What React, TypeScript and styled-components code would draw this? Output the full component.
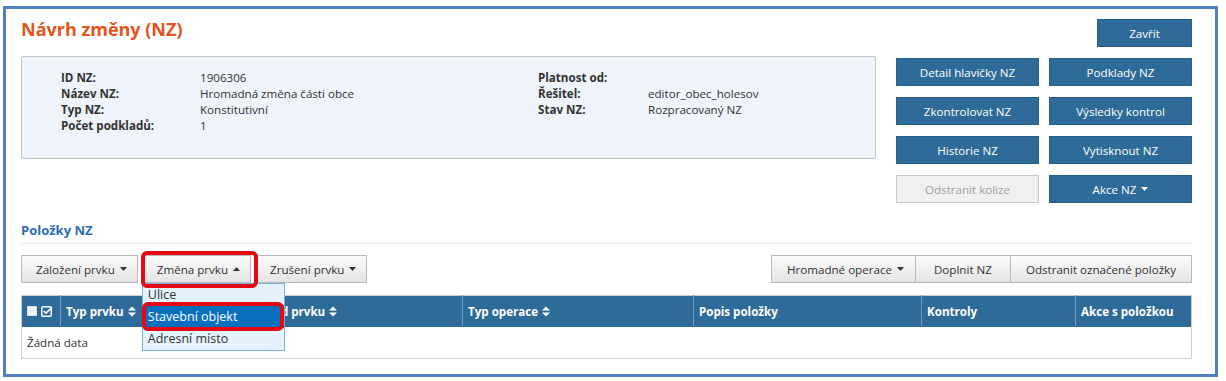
import React from 'react';
import styled, { createGlobalStyle } from 'styled-components';

const BLUE = '#2e6b98';
const RED = '#e50914';

const GlobalStyle = createGlobalStyle`
  html, body { margin: 0; padding: 0; background: #fff; }
  body {
    font-family: 'Open Sans', 'Noto Sans', Arial, sans-serif;
    font-size: 11.6px;
    color: #333;
  }
`;

const Frame = styled.div`
  box-sizing: border-box;
  width: 1215px;
  height: 371px;
  margin: 6px 0 0 3px;
  border: 3px solid #4f81bd;
  padding: 8px 23px 0 15px;
`;

const Top = styled.div`
  display: flex;
  gap: 20px;
  align-items: flex-start;
`;

const LeftCol = styled.div`
  flex: 1;
`;

const Title = styled.h1`
  margin: 0;
  font-size: 18px;
  line-height: 24px;
  font-weight: 700;
  color: #e3541b;
`;

const InfoBox = styled.div`
  margin-top: 15px;
  height: 88px;
  box-sizing: content-box;
  border: 1px solid #c6c6c6;
  border-radius: 2px;
  background: #eef4fa;
  padding: 13px 39px 0;
  display: flex;
`;

const InfoGroup = styled.div<{ $labelWidth: number; $width?: number }>`
  display: grid;
  grid-template-columns: ${(p) => p.$labelWidth}px auto;
  grid-auto-rows: 16px;
  line-height: 16px;
  align-content: start;
  ${(p) => (p.$width ? `width: ${p.$width}px;` : '')}
`;

const Label = styled.span`
  font-weight: 700;
`;

const Value = styled.span``;

const ButtonGrid = styled.div`
  margin-top: 2px;
  display: grid;
  grid-template-columns: 143px 143px;
  grid-auto-rows: 28px;
  column-gap: 10px;
  row-gap: 11px;
`;

const PrimaryButton = styled.button<{ $narrow?: boolean; $col?: number }>`
  font-family: inherit;
  font-size: 11.6px;
  border: 1px solid #285f88;
  background: ${BLUE};
  color: #fff;
  padding: 0;
  cursor: pointer;
  display: flex;
  align-items: center;
  justify-content: center;
  gap: 5px;
  ${(p) => (p.$col ? `grid-column: ${p.$col};` : '')}
  ${(p) => (p.$narrow ? 'width: 95px; justify-self: end;' : '')}

  &:disabled {
    background: #f0f0f0;
    border-color: #c8c8c8;
    color: #a0a0a0;
    cursor: default;
  }
`;

const SectionTitle = styled.h2`
  margin: 18px 0 0;
  padding-bottom: 4px;
  border-bottom: 1px solid #e6e6e6;
  font-size: 13px;
  line-height: 18px;
  font-weight: 700;
  color: #2a6cb5;
`;

const Toolbar = styled.div`
  margin-top: 11px;
  display: flex;
  justify-content: space-between;
  height: 28px;
`;

const ButtonRow = styled.div<{ $gap: number }>`
  display: flex;
  gap: ${(p) => p.$gap}px;
`;

const DropWrap = styled.div`
  position: relative;
  display: flex;
`;

const GrayButton = styled.button<{ $pl?: number; $pr?: number; $joined?: boolean }>`
  font-family: inherit;
  font-size: 11.6px;
  color: #333;
  height: 28px;
  padding: 0 ${(p) => p.$pr ?? 15}px 0 ${(p) => p.$pl ?? 15}px;
  border: 1px solid #b9b9b9;
  background: linear-gradient(#fbfbfb, #e4e4e4);
  display: flex;
  align-items: center;
  gap: 5px;
  cursor: pointer;
  ${(p) => (p.$joined ? 'margin-left: -1px;' : '')}
`;

const Annotation = styled.div<{ $l: number; $t: number; $w: number; $h: number }>`
  position: absolute;
  left: ${(p) => p.$l}px;
  top: ${(p) => p.$t}px;
  width: ${(p) => p.$w}px;
  height: ${(p) => p.$h}px;
  box-sizing: border-box;
  border: 4px solid ${RED};
  border-radius: 6px;
  pointer-events: none;
  z-index: 3;
`;

const Menu = styled.ul`
  position: absolute;
  top: 100%;
  left: 0;
  width: 143px;
  box-sizing: border-box;
  margin: 0;
  padding: 1px 0;
  list-style: none;
  background: #e4f2fd;
  border: 1px solid #7ab2dd;
  z-index: 2;
`;

const MenuItem = styled.li<{ $active?: boolean; $h: number }>`
  height: ${(p) => p.$h}px;
  line-height: ${(p) => p.$h}px;
  padding-left: 5px;
  font-size: 12.5px;
  color: ${(p) => (p.$active ? '#fff' : '#333')};
  background: ${(p) => (p.$active ? '#0b6fbe' : 'transparent')};
`;

const Table = styled.table`
  margin-top: 12px;
  width: 1170px;
  border-collapse: collapse;
  table-layout: fixed;
  border: 1px solid #cfcfcf;
`;

const Th = styled.th`
  height: 31px;
  padding: 0 5px;
  background: ${BLUE};
  color: #fff;
  font-weight: 700;
  font-size: 11.6px;
  text-align: left;
  white-space: nowrap;
  border-left: 1px solid #6f95b8;

  &:first-child {
    border-left: none;
  }
`;

const HeadInner = styled.span`
  display: inline-flex;
  align-items: center;
  gap: 4px;
`;

const Td = styled.td`
  height: 31px;
  padding: 0 5px;
  background: #fff;
`;

const Caret = ({ up, color = '#333' }: { up?: boolean; color?: string }) => (
  <svg width="7" height="4" viewBox="0 0 7 4">
    <path d={up ? 'M0 4 L3.5 0 L7 4 Z' : 'M0 0 L7 0 L3.5 4 Z'} fill={color} />
  </svg>
);

const SortIcon = () => (
  <svg width="8" height="11" viewBox="0 0 8 11">
    <path d="M0 4.5 L4 0.5 L8 4.5 Z M0 6.5 L8 6.5 L4 10.5 Z" fill="#fff" />
  </svg>
);

const BoxIcon = () => (
  <svg width="10" height="10" viewBox="0 0 10 10">
    <rect x="0" y="0" width="10" height="10" rx="1" fill="#f4f4f4" stroke="#c8d3dc" strokeWidth="1" />
  </svg>
);

const CheckIcon = () => (
  <svg width="12" height="11" viewBox="0 0 12 11">
    <rect x="0.75" y="0.75" width="9.5" height="9.5" rx="1.5" fill="none" stroke="#fff" strokeWidth="1.5" />
    <path d="M2.8 5 L5 7.2 L11 1.5" fill="none" stroke="#fff" strokeWidth="1.6" />
  </svg>
);

const colWidths = [39, 200, 202, 231, 228, 154, 116];

export default function App() {
  return (
    <>
      <GlobalStyle />
      <Frame>
        <Top>
          <LeftCol>
            <Title>Návrh změny (NZ)</Title>
            <InfoBox>
              <InfoGroup $labelWidth={139} $width={477}>
                <Label>ID NZ:</Label>
                <Value>1906306</Value>
                <Label>Název NZ:</Label>
                <Value>Hromadná změna části obce</Value>
                <Label>Typ NZ:</Label>
                <Value>Konstitutivní</Value>
                <Label>Počet podkladů:</Label>
                <Value>1</Value>
              </InfoGroup>
              <InfoGroup $labelWidth={110}>
                <Label>Platnost od:</Label>
                <Value />
                <Label>Řešitel:</Label>
                <Value>editor_obec_holesov</Value>
                <Label>Stav NZ:</Label>
                <Value>Rozpracovaný NZ</Value>
              </InfoGroup>
            </InfoBox>
          </LeftCol>
          <ButtonGrid>
            <PrimaryButton $col={2} $narrow>
              Zavřít
            </PrimaryButton>
            <PrimaryButton>Detail hlavičky NZ</PrimaryButton>
            <PrimaryButton>Podklady NZ</PrimaryButton>
            <PrimaryButton>Zkontrolovat NZ</PrimaryButton>
            <PrimaryButton>Výsledky kontrol</PrimaryButton>
            <PrimaryButton>Historie NZ</PrimaryButton>
            <PrimaryButton>Vytisknout NZ</PrimaryButton>
            <PrimaryButton disabled>Odstranit kolize</PrimaryButton>
            <PrimaryButton>
              Akce NZ <Caret color="#fff" />
            </PrimaryButton>
          </ButtonGrid>
        </Top>

        <SectionTitle>Položky NZ</SectionTitle>

        <Toolbar>
          <ButtonRow $gap={4}>
            <GrayButton $pl={14} $pr={10}>
              Založení prvku <Caret />
            </GrayButton>
            <DropWrap>
              <GrayButton $pl={14} $pr={10}>
                Změna prvku <Caret up />
              </GrayButton>
              <Annotation $l={-1} $t={-4} $w={117} $h={37} />
              <Menu>
                <MenuItem $h={20}>Ulice</MenuItem>
                <MenuItem $h={23} $active>
                  Stavební objekt
                </MenuItem>
                <MenuItem $h={21}>Adresní místo</MenuItem>
                <Annotation $l={-1} $t={18} $w={142} $h={29} />
              </Menu>
            </DropWrap>
            <GrayButton $pl={14} $pr={10}>
              Zrušení prvku <Caret />
            </GrayButton>
          </ButtonRow>
          <ButtonRow $gap={0}>
            <GrayButton $pl={15} $pr={11}>
              Hromadné operace <Caret />
            </GrayButton>
            <GrayButton $joined $pl={18} $pr={18}>
              Doplnit NZ
            </GrayButton>
            <GrayButton $joined>Odstranit označené položky</GrayButton>
          </ButtonRow>
        </Toolbar>

        <Table>
          <colgroup>
            {colWidths.map((w, i) => (
              <col key={i} style={{ width: w }} />
            ))}
          </colgroup>
          <thead>
            <tr>
              <Th>
                <HeadInner>
                  <BoxIcon />
                  <CheckIcon />
                </HeadInner>
              </Th>
              <Th>
                <HeadInner>
                  Typ prvku <SortIcon />
                </HeadInner>
              </Th>
              <Th>
                <HeadInner>
                  Kód prvku <SortIcon />
                </HeadInner>
              </Th>
              <Th>
                <HeadInner>
                  Typ operace <SortIcon />
                </HeadInner>
              </Th>
              <Th>Popis položky</Th>
              <Th>Kontroly</Th>
              <Th>Akce s položkou</Th>
            </tr>
          </thead>
          <tbody>
            <tr>
              <Td colSpan={7}>Žádná data</Td>
            </tr>
          </tbody>
        </Table>
      </Frame>
    </>
  );
}
